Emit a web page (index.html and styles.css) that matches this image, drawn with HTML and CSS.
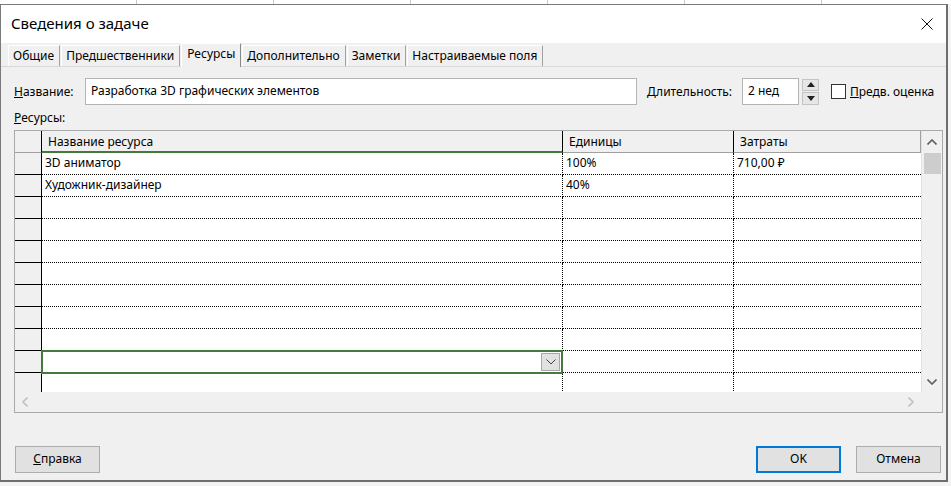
FILE: index.html
```html
<!DOCTYPE html>
<html lang="ru">
<head>
<meta charset="utf-8">
<title>Сведения о задаче</title>
<link rel="stylesheet" href="styles.css">
</head>
<body>
<div class="backdrop"></div>
<div class="dialog">
  <div class="titlebar">
    <span class="title">Сведения о задаче</span>
    <svg class="close" width="12" height="12" viewBox="0 0 12 12"><path d="M0.5 0.5L11.5 11.5M11.5 0.5L0.5 11.5" stroke="#111" stroke-width="1" fill="none"/></svg>
  </div>
  <div class="tabs">
    <div class="tab">Общие</div>
    <div class="tab">Предшественники</div>
    <div class="tab active">Ресурсы</div>
    <div class="tab">Дополнительно</div>
    <div class="tab">Заметки</div>
    <div class="tab">Настраиваемые поля</div>
  </div>
  <div class="panel">
    <div class="name-row">
      <span class="lbl lbl-name"><u>Н</u>азвание:</span>
      <div class="textbox tb-name">Разработка 3D графических элементов</div>
      <span class="lbl lbl-dur"><u>Д</u>лительность:</span>
      <div class="textbox tb-dur">2 нед</div>
      <div class="spin">
        <div class="spin-btn"><svg width="8" height="5" viewBox="0 0 8 5"><path d="M0 5L4 0L8 5Z" fill="#222"/></svg></div>
        <div class="spin-btn"><svg width="8" height="5" viewBox="0 0 8 5"><path d="M0 0L4 5L8 0Z" fill="#222"/></svg></div>
      </div>
      <div class="checkbox"></div>
      <span class="lbl lbl-est"><u>П</u>редв. оценка</span>
    </div>
    <div class="res-label"><u>Р</u>есурсы:</div>
    <div class="grid">
      <div class="grid-main">
        <div class="grid-cells">
          <div class="row head">
            <div class="c rh"></div>
            <div class="c c1 sel-col">Название ресурса</div>
            <div class="c c2">Единицы</div>
            <div class="c c3">Затраты</div>
          </div>
          <div class="row"><div class="c rh"></div><div class="c c1">3D аниматор</div><div class="c c2">100%</div><div class="c c3">710,00 ₽</div></div>
          <div class="row"><div class="c rh"></div><div class="c c1">Художник-дизайнер</div><div class="c c2">40%</div><div class="c c3"></div></div>
          <div class="row"><div class="c rh"></div><div class="c c1"></div><div class="c c2"></div><div class="c c3"></div></div>
          <div class="row"><div class="c rh"></div><div class="c c1"></div><div class="c c2"></div><div class="c c3"></div></div>
          <div class="row"><div class="c rh"></div><div class="c c1"></div><div class="c c2"></div><div class="c c3"></div></div>
          <div class="row"><div class="c rh"></div><div class="c c1"></div><div class="c c2"></div><div class="c c3"></div></div>
          <div class="row"><div class="c rh"></div><div class="c c1"></div><div class="c c2"></div><div class="c c3"></div></div>
          <div class="row"><div class="c rh"></div><div class="c c1"></div><div class="c c2"></div><div class="c c3"></div></div>
          <div class="row"><div class="c rh"></div><div class="c c1"></div><div class="c c2"></div><div class="c c3"></div></div>
          <div class="row"><div class="c rh"></div><div class="c c1 active-cell"><div class="dd"><svg width="10" height="6" viewBox="0 0 10 6"><path d="M0.5 0.5L5 5L9.5 0.5" stroke="#444" stroke-width="1" fill="none"/></svg></div></div><div class="c c2"></div><div class="c c3"></div></div>
          <div class="row last"><div class="c rh"></div><div class="c c1"></div><div class="c c2"></div><div class="c c3"></div></div>
        </div>
        <div class="vscroll">
          <div class="arrow-v"><svg width="10" height="6" viewBox="0 0 10 6"><path d="M0.5 5.5L5 1L9.5 5.5" stroke="#606060" stroke-width="1.6" fill="none"/></svg></div>
          <div class="thumb"></div>
          <div class="track"></div>
          <div class="arrow-v"><svg width="10" height="6" viewBox="0 0 10 6"><path d="M0.5 0.5L5 5L9.5 0.5" stroke="#606060" stroke-width="1.6" fill="none"/></svg></div>
        </div>
      </div>
      <div class="hscroll">
        <div class="hbar">
          <div class="arrow-h"><svg width="6" height="10" viewBox="0 0 6 10"><path d="M5.5 0.5L1 5L5.5 9.5" stroke="#c2c2c2" stroke-width="1.6" fill="none"/></svg></div>
          <div class="arrow-h"><svg width="6" height="10" viewBox="0 0 6 10"><path d="M0.5 0.5L5 5L0.5 9.5" stroke="#c2c2c2" stroke-width="1.6" fill="none"/></svg></div>
        </div>
        <div class="corner"></div>
      </div>
    </div>
  </div>
  <div class="buttons">
    <div class="btn"><u>С</u>правка</div>
    <div class="spacer"></div>
    <div class="btn default">OK</div>
    <div class="btn">Отмена</div>
  </div>
</div>
</body>
</html>
```
FILE: styles.css
```css
* { box-sizing: border-box; }
html, body { margin: 0; padding: 0; }
body {
  width: 951px;
  height: 486px;
  overflow: hidden;
  background: #f4f4f4;
  font-family: "Noto Sans", "Open Sans", sans-serif;
  font-size: 12px;
  color: #000;
  position: relative;
}
.backdrop {
  height: 4px;
  background: repeating-linear-gradient(90deg, #fff 0 136px, #c8c8c8 136px 137px);
}
.dialog {
  width: 948px;
  height: 478px;
  border: 1px solid #7a7a7a;
  border-right: 2px solid #6e6e6e;
  border-bottom: 2px solid #6e6e6e;
  background: #f0f0f0;
  display: flex;
  flex-direction: column;
}
.titlebar {
  height: 38px;
  background: #fff;
  display: flex;
  align-items: center;
  padding-left: 10px;
  padding-right: 12px;
}
.title {
  font-size: 15px;
  flex: 1;
  color: #000;
  padding-bottom: 2px;
}
.close { margin-top: -1px; margin-right: 1px; }
.tabs {
  height: 24px;
  display: flex;
  align-items: flex-end;
  padding-left: 7px;
  border-bottom: 1px solid #d9d9d9;
}
.tab {
  height: 21px;
  padding: 0 5px 1px 4px;
  border-left: 1px solid #fff;
  border-right: 1px solid #a0a0a0;
  border-top: 1px solid #fff;
  display: flex;
  align-items: center;
  line-height: 1;
  margin-right: 1px;
}
.tab.active {
  height: 24px;
  background: #f0f0f0;
  padding: 0 5px 4px;
  margin-bottom: -1px;
  border-right: 1px solid #8a8a8a;
}
.panel {
  padding: 11px 0 0 13px;
}
.name-row {
  display: flex;
  align-items: center;
  height: 27px;
}
.lbl { white-space: nowrap; }
.lbl-name { width: 71px; }
.textbox {
  height: 27px;
  background: #fff;
  border: 1px solid #b4b4b4;
  display: flex;
  align-items: center;
  padding: 0 0 3px 5px;
}
.tb-name { width: 552px; }
.lbl-dur { margin-left: 10px; width: 95px; }
.tb-dur { width: 57px; }
.spin {
  margin-left: 3px;
  width: 17px;
  height: 26px;
  display: flex;
  flex-direction: column;
  gap: 1px;
}
.spin-btn {
  flex: 1;
  background: #e6e6e6;
  border: 1px solid #c4c4c4;
  display: flex;
  align-items: center;
  justify-content: center;
}
.checkbox {
  margin-left: 12px;
  width: 15px;
  height: 15px;
  border: 1px solid #333;
  background: #fff;
}
.lbl-est { margin-left: 4px; }
.res-label {
  margin-top: 5px;
  height: 20px;
  line-height: 16px;
}
.grid {
  width: 929px;
  border: 1px solid #a9a9a9;
  background: #fff;
}
.grid-main { display: flex; height: 261px; }
.grid-cells {
  width: 906px;
  height: 261px;
  overflow: hidden;
}
.row {
  display: flex;
  height: 22px;
}
.c {
  height: 22px;
  border-bottom: 1px dotted #000;
  border-right: 1px dotted #000;
  padding-left: 3px;
  line-height: 20px;
  white-space: nowrap;
  overflow: hidden;
  position: relative;
}
.rh {
  width: 27px;
  background: #f0f0f0;
  border-bottom: 1px solid #000;
  border-right: 1px solid #000;
}
.c1 { width: 521px; }
.c2 { width: 171px; }
.c3 { width: 187px; border-right: none; }
.row.head { height: 22px; }
.row.head .c {
  background: #f0f0f0;
  border-bottom: 1px solid #a0a0a0;
  border-right: 1px solid #000;
  padding-left: 6px;
  line-height: 22px;
}
.row.head .c3 { border-right: 1px solid #a0a0a0; }
.row.head .rh { padding-left: 0; }
.row.head .sel-col { border-bottom: 2px solid #457a3f; }
.active-cell {
  border: 2px solid #457a3f !important;
  margin-left: -1px;
  width: 523px;
  height: 24px;
  margin-top: -1px;
  z-index: 2;
}
.dd {
  position: absolute;
  right: 1px;
  top: 1px;
  width: 19px;
  height: 18px;
  background: #e1e1e1;
  border: 1px solid #a8a8a8;
  display: flex;
  align-items: center;
  justify-content: center;
}
.vscroll {
  width: 21px;
  background: #f0f0f0;
  border-left: 1px solid #e3e3e3;
  display: flex;
  flex-direction: column;
}
.arrow-v {
  height: 21px;
  display: flex;
  align-items: center;
  justify-content: center;
}
.thumb {
  margin: 1px 1px 0 2px;
  height: 21px;
  background: #cdcdcd;
}
.track { flex: 1; }
.hscroll {
  display: flex;
  height: 20px;
  background: #f0f0f0;
}
.hbar {
  width: 906px;
  display: flex;
  justify-content: space-between;
  align-items: center;
  padding: 0 7px;
}
.corner { flex: 1; background: #f0f0f0; }
.buttons {
  margin-top: 33px;
  display: flex;
  padding: 0 5px 0 14px;
}
.spacer { flex: 1; }
.btn {
  width: 85px;
  height: 27px;
  background: #e1e1e1;
  border: 1px solid #adadad;
  display: flex;
  align-items: center;
  justify-content: center;
  padding-bottom: 2px;
  margin-left: 15px;
}
.btn:first-child { margin-left: 0; }
.btn.default { border: 2px solid #0078d7; }
```
